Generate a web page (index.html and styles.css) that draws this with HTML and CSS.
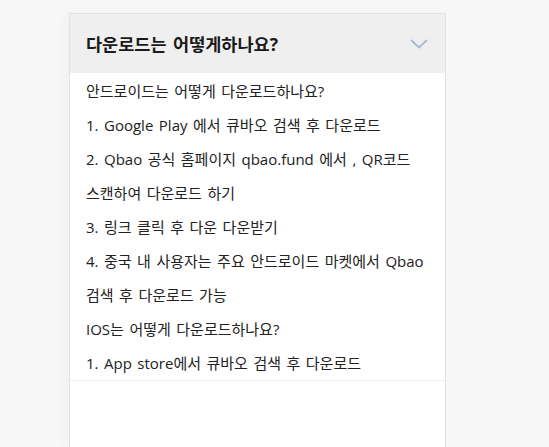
FILE: index.html
```html
<!DOCTYPE html>
<html lang="ko">
<head>
<meta charset="utf-8">
<link rel="stylesheet" href="styles.css">
</head>
<body>
<div class="page">
  <div class="card">
    <div class="head">
      <span class="title">다운로드는 어떻게하나요?</span>
      <svg class="chev" width="18" height="10" viewBox="0 0 18 10"><path d="M1 1 L9 8.5 L17 1" fill="none" stroke="#a9b9d1" stroke-width="1.8"/></svg>
    </div>
    <div class="body">
      <p>안드로이드는 어떻게 다운로드하나요?</p>
      <p>1. Google Play 에서 큐바오 검색 후 다운로드</p>
      <p>2. Qbao 공식 홈페이지 qbao.fund 에서 , QR코드 스캔하여 다운로드 하기</p>
      <p>3. 링크 클릭 후 다운 다운받기</p>
      <p>4. 중국 내 사용자는 주요 안드로이드 마켓에서 Qbao 검색 후 다운로드 가능</p>
      <p>IOS는 어떻게 다운로드하나요?</p>
      <p>1. App store에서 큐바오 검색 후 다운로드</p>
    </div>
  </div>
</div>
</body>
</html>
```
FILE: styles.css
```css
html, body {
  margin: 0;
  padding: 0;
  height: 100%;
}
body {
  background: #f7f7f7;
  font-family: "Open Sans", "Noto Sans CJK KR", sans-serif;
  color: #222;
  overflow: hidden;
}
.page {
  padding-top: 13px;
  padding-left: 69px;
  height: 100%;
  box-sizing: border-box;
}
.card {
  width: 377px;
  height: 100%;
  background: #fff;
  border: 1px solid #e2e2e2;
  border-bottom: none;
  box-sizing: border-box;
  box-shadow: -6px 0 10px rgba(0,0,0,0.025);
}
.head {
  height: 59px;
  background: #efefef;
  display: flex;
  align-items: center;
  justify-content: space-between;
  padding: 0 17px 0 16px;
}
.title {
  font-size: 17.5px;
  font-weight: 700;
  color: #1a1a1a;
  word-spacing: 2px;
  margin-top: -1px;
}
.chev {
  display: block;
  margin-top: 1px;
}
.body {
  padding: 1px 16px 0;
  border-bottom: 1px solid #ececec;
}
.body p {
  margin: 0;
  font-size: 15px;
  line-height: 34px;
  color: #222;
  word-spacing: 1.6px;
  word-break: keep-all;
}
```
